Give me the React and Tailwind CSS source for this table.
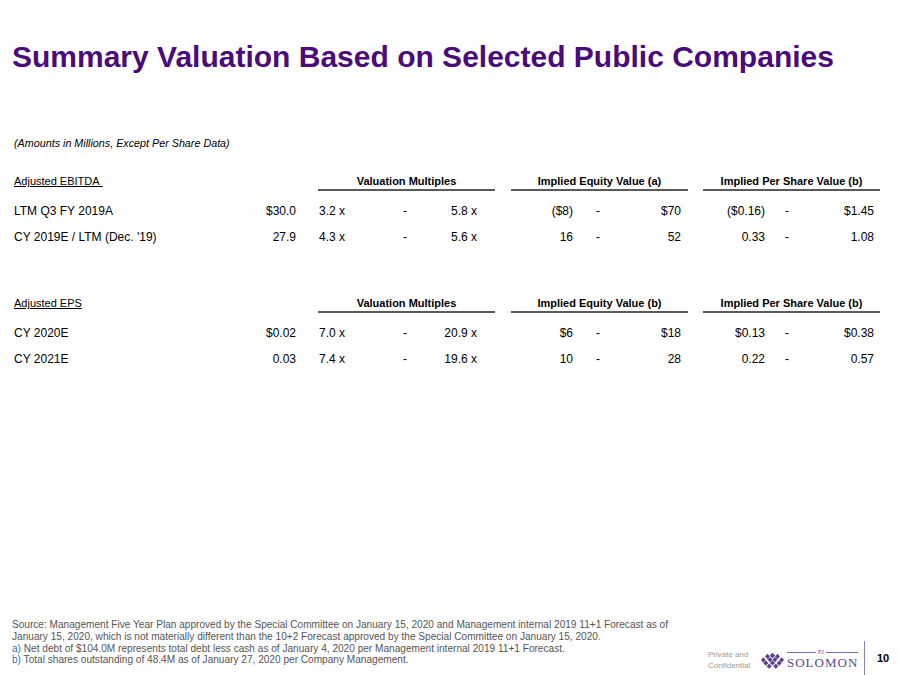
import React from 'react';

const blocks = [
  {
    label: 'Adjusted EBITDA\u00a0',
    heads: ['Valuation Multiples', 'Implied Equity Value (a)', 'Implied Per Share Value (b)'],
    rows: [
      ['LTM Q3 FY 2019A', '$30.0', '3.2 x', '5.8 x', '($8)', '$70', '($0.16)', '$1.45'],
      ["CY 2019E / LTM (Dec. '19)", '27.9', '4.3 x', '5.6 x', '16', '52', '0.33', '1.08'],
    ],
  },
  {
    label: 'Adjusted EPS',
    heads: ['Valuation Multiples', 'Implied Equity Value (b)', 'Implied Per Share Value (b)'],
    rows: [
      ['CY 2020E', '$0.02', '7.0 x', '20.9 x', '$6', '$18', '$0.13', '$0.38'],
      ['CY 2021E', '0.03', '7.4 x', '19.6 x', '10', '28', '0.22', '0.57'],
    ],
  },
];

const Head = ({ children, className = '' }) => (
  <div className={`text-[11px] leading-[13px] pb-[1px] border-b-2 ${className}`}>{children}</div>
);

const Block = ({ block, className = '' }) => (
  <div className={`ml-[14px] ${className}`}>
    {/* header row */}
    <div className="flex items-end">
      <Head className="w-[282px] border-transparent">
        <span className="underline">{block.label}</span>
      </Head>
      <Head className="ml-[22px] w-[177px] border-[#5a5a5a] text-center font-bold">{block.heads[0]}</Head>
      <Head className="ml-[16px] w-[177px] border-[#5a5a5a] text-center font-bold">{block.heads[1]}</Head>
      <Head className="ml-[15px] w-[177px] border-[#5a5a5a] text-center font-bold">{block.heads[2]}</Head>
    </div>

    <div className="mt-[7px]">
      {block.rows.map((r) => (
        <div key={r[0]} className="flex h-[26px] items-center text-[12px] leading-[14px]">
          <div className="w-[200px]">{r[0]}</div>
          <div className="w-[82px] text-right">{r[1]}</div>

          {/* multiples */}
          <div className="ml-[22px] w-[177px] flex">
            <div className="w-[61px] pl-[1px]">{r[2]}</div>
            <div className="w-[52px] text-center">-</div>
            <div className="w-[46px] text-right">{r[3]}</div>
          </div>

          {/* equity value */}
          <div className="ml-[16px] w-[177px] flex">
            <div className="w-[62px] text-right">{r[4]}</div>
            <div className="w-[50px] text-center">-</div>
            <div className="w-[58px] text-right">{r[5]}</div>
          </div>

          {/* per share */}
          <div className="ml-[15px] w-[177px] flex">
            <div className="w-[62px] text-right">{r[6]}</div>
            <div className="w-[44px] text-center">-</div>
            <div className="w-[65px] text-right">{r[7]}</div>
          </div>
        </div>
      ))}
    </div>
  </div>
);

const Gem = () => (
  <svg width="23" height="18" viewBox="0 0 22 17" className="shrink-0">
    <g fill="#5b3f8e">
      <path d="M11 0.5 L13.6 3.2 L11 5.9 L8.4 3.2 Z" />
      <path d="M6.2 1.6 L8.6 4.1 L6.2 6.6 L3.8 4.1 Z" />
      <path d="M15.8 1.6 L18.2 4.1 L15.8 6.6 L13.4 4.1 Z" />
      <path d="M2.2 5 L4.6 7.5 L2.2 10 L0 7.5 Z" />
      <path d="M8.6 4.6 L11 7.1 L8.6 9.6 L6.2 7.1 Z" />
      <path d="M13.4 4.6 L15.8 7.1 L13.4 9.6 L11 7.1 Z" />
      <path d="M19.8 5 L22 7.5 L19.8 10 L17.4 7.5 Z" />
      <path d="M4.6 8 L7 10.5 L4.6 13 L2.2 10.5 Z" />
      <path d="M11 7.8 L13.4 10.3 L11 12.8 L8.6 10.3 Z" />
      <path d="M17.4 8 L19.8 10.5 L17.4 13 L15 10.5 Z" />
      <path d="M7.8 10.9 L10.2 13.5 L7.8 16 L5.4 13.5 Z" />
      <path d="M14.2 10.9 L16.6 13.5 L14.2 16 L11.8 13.5 Z" />
    </g>
  </svg>
);

export default function App() {
  return (
    <div className="w-[900px] h-[675px] bg-white text-black flex flex-col overflow-hidden font-['Liberation_Sans',Arial,sans-serif]">
      <h1 className="mt-[40px] ml-[12px] text-[30px] leading-[34px] font-bold text-[#4b0c7b]">
        Summary Valuation Based on Selected Public Companies
      </h1>

      <p className="mt-[62px] ml-[14px] text-[10.75px] leading-[14px] italic">
        (Amounts in Millions, Except Per Share Data)
      </p>

      <Block block={blocks[0]} className="mt-[25px]" />
      <Block block={blocks[1]} className="mt-[47px]" />

      <div className="mt-auto flex">
        <div className="w-[708px] pl-[12px] pb-[9px] self-end whitespace-nowrap text-[10.1px] leading-[11.7px] text-[#555]">
          Source: Management Five Year Plan approved by the Special Committee on January 15, 2020 and Management internal 2019 11+1 Forecast as of
          <br />
          January 15, 2020, which is not materially different than the 10+2 Forecast approved by the Special Committee on January 15, 2020.
          <br />
          <span className="text-[#2e75b6]">a)</span> Net debt of $104.0M represents total debt less cash as of January 4, 2020 per Management internal 2019 11+1 Forecast.
          <br />
          <span className="text-[#2e75b6]">b)</span> Total shares outstanding of 48.4M as of January 27, 2020 per Company Management.
        </div>

        <div className="h-[34px] self-end flex items-center">
          <div className="w-[53px] pt-[3px] text-[8px] leading-[11px] text-[#9a9a9a]">
            Private and
            <br />
            Confidential
          </div>
          <div className="w-[95px] flex items-end pt-[2px]">
            <Gem />
            <div className="ml-[3px] flex flex-col">
              <div className="flex items-center h-[7px]">
                <div className="w-[29px] h-px bg-[#7d6aa6]" />
                <span className="mx-[2px] text-[5px] leading-[7px] text-[#5b4a8b]">PJ</span>
                <div className="w-[32px] h-px bg-[#7d6aa6]" />
              </div>
              <div className="text-[13px] leading-[14px] tracking-[1px] text-[#5b4a8b] font-['Liberation_Serif',serif]">
                SOLOMON
              </div>
            </div>
          </div>
          <div className="ml-[8px] w-px self-stretch bg-[#8c7fb0]" />
          <div className="ml-[12px] text-[11px] font-bold">10</div>
        </div>
      </div>
    </div>
  );
}
